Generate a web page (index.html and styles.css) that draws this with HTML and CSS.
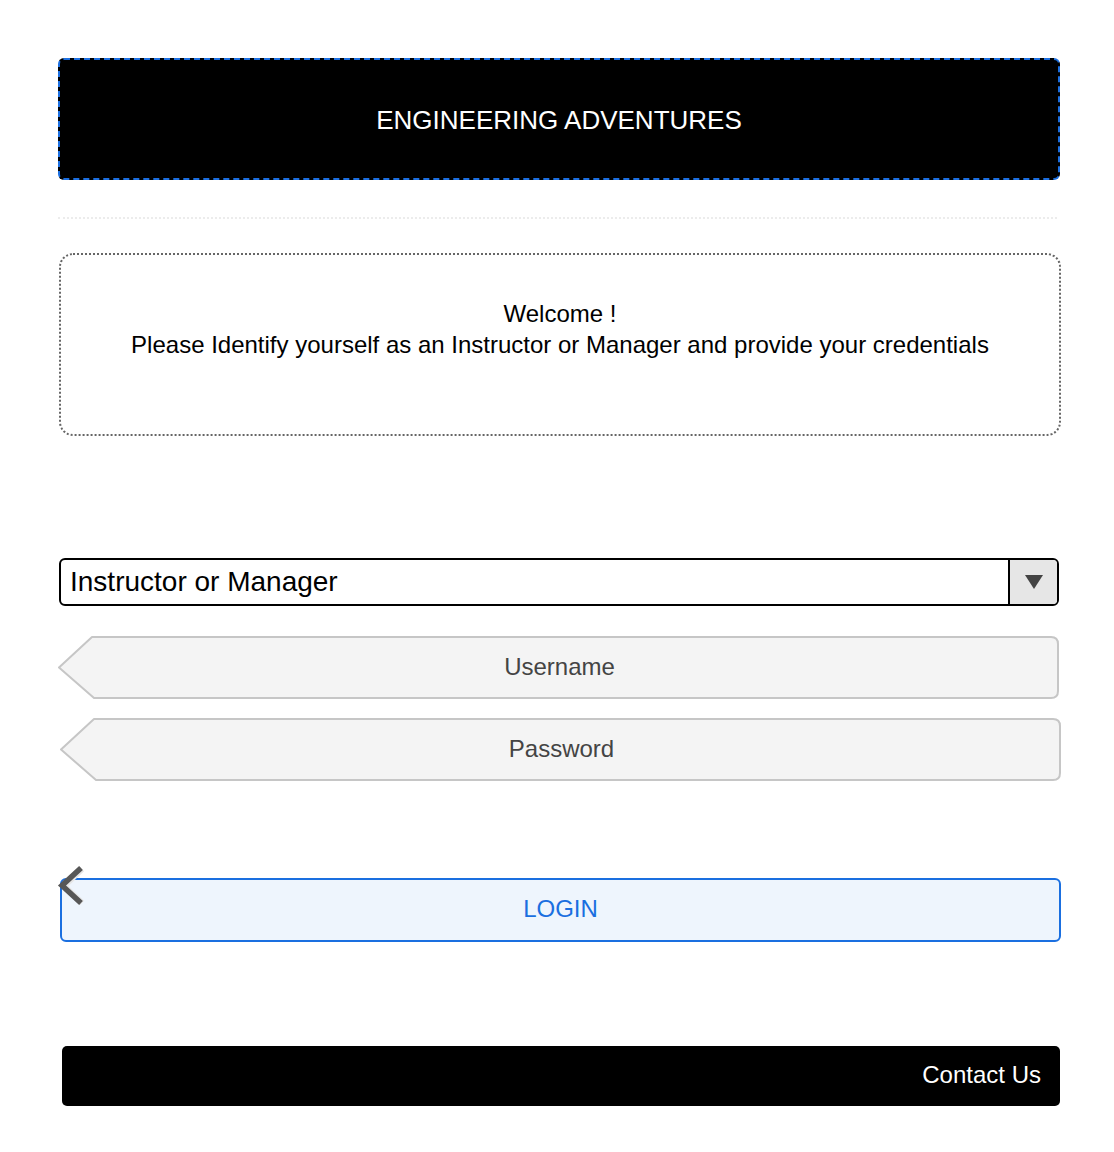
FILE: index.html
```html
<!DOCTYPE html>
<html>
<head>
<meta charset="utf-8">
<link rel="stylesheet" href="styles.css">
</head>
<body>
<div class="page">
  <header class="banner">ENGINEERING ADVENTURES</header>
  <div class="separator"></div>
  <section class="welcome">
    <p>Welcome !</p>
    <p>Please Identify yourself as an Instructor or Manager and provide your credentials</p>
  </section>
  <div class="select">
    <span class="select-value">Instructor or Manager</span>
    <span class="select-btn"><svg width="20" height="16" viewBox="0 0 20 16"><path d="M1 1 H19 L10 15 Z" fill="#444"/></svg></span>
  </div>
  <div class="field field-user">
    <svg class="field-shape" width="1001" height="63" viewBox="0 0 1001 63"><path d="M34 1 H993 Q1000 1 1000 8 V55 Q1000 62 993 62 H36 L1 31.5 Z" fill="#f4f4f4" stroke="#c6c6c6" stroke-width="2" stroke-linejoin="round"/></svg>
    <span class="field-label">Username</span>
  </div>
  <div class="field field-pass">
    <svg class="field-shape" width="1001" height="63" viewBox="0 0 1001 63"><path d="M34 1 H993 Q1000 1 1000 8 V55 Q1000 62 993 62 H36 L1 31.5 Z" fill="#f4f4f4" stroke="#c6c6c6" stroke-width="2" stroke-linejoin="round"/></svg>
    <span class="field-label">Password</span>
  </div>
  <div class="login">
    <svg class="back" width="30" height="42" viewBox="0 0 30 42"><path d="M25 3 L7 20 L25 37" fill="none" stroke="#e6e6e6" stroke-width="6"/><path d="M24 2 L5 19.5 L24 37" fill="none" stroke="#575757" stroke-width="5.5"/></svg>
    <span>LOGIN</span>
  </div>
  <footer class="contact">Contact Us</footer>
</div>
</body>
</html>
```
FILE: styles.css
```css
* { box-sizing: border-box; }
html, body { margin: 0; padding: 0; background: #fff; }
body { font-family: "Liberation Sans", Arial, sans-serif; }
.page { padding: 58px 0 0 58px; width: 1114px; }

.banner {
  width: 1002px; height: 122px;
  background: #000; color: #fff;
  border: 2px dashed #1c6fe0; border-radius: 6px;
  display: flex; align-items: center; justify-content: center;
  font-size: 26px; padding-top: 2px;
}
.separator {
  margin-top: 37px; width: 999px;
  border-top: 2px dotted #ececec;
}
.welcome {
  margin: 34px 0 0 1px; width: 1002px; height: 183px;
  border: 2px dotted #666; border-radius: 14px;
  padding-top: 43px; text-align: center;
  font-size: 24px; line-height: 31px; color: #000;
}
.welcome p { margin: 0; }

.select {
  margin: 122px 0 0 1px; width: 1000px; height: 48px;
  border: 2px solid #000; border-radius: 6px; overflow: hidden;
  display: flex; align-items: stretch;
}
.select-value { flex: 1; padding-left: 9px; font-size: 28px; line-height: 44px; color: #000; }
.select-btn {
  width: 49px; background: #e6e6e6; border-left: 2px solid #000;
  display: flex; align-items: center; justify-content: center;
}

.field { position: relative; width: 1001px; height: 63px; display: flex; align-items: center; justify-content: center; padding-bottom: 2px; }
.field-user { margin-top: 30px; }
.field-pass { margin: 19px 0 0 2px; }
.field-shape { position: absolute; left: 0; top: 0; }
.field-label { position: relative; font-size: 24px; color: #444; padding-left: 2px; }

.login {
  position: relative;
  margin: 97px 0 0 2px; width: 1001px; height: 64px;
  border: 2px solid #1a6fe0; border-radius: 6px; background: #eef5fd;
  display: flex; align-items: center; justify-content: center;
  color: #1a6fe0; font-size: 24px; padding-bottom: 2px;
}
.back { position: absolute; left: -5px; top: -14px; }

.contact {
  margin: 104px 0 0 4px; width: 998px; height: 60px;
  background: #000; color: #fff; border-radius: 5px;
  display: flex; align-items: center; justify-content: flex-end;
  padding-right: 19px; font-size: 24px; padding-bottom: 2px;
}
```
